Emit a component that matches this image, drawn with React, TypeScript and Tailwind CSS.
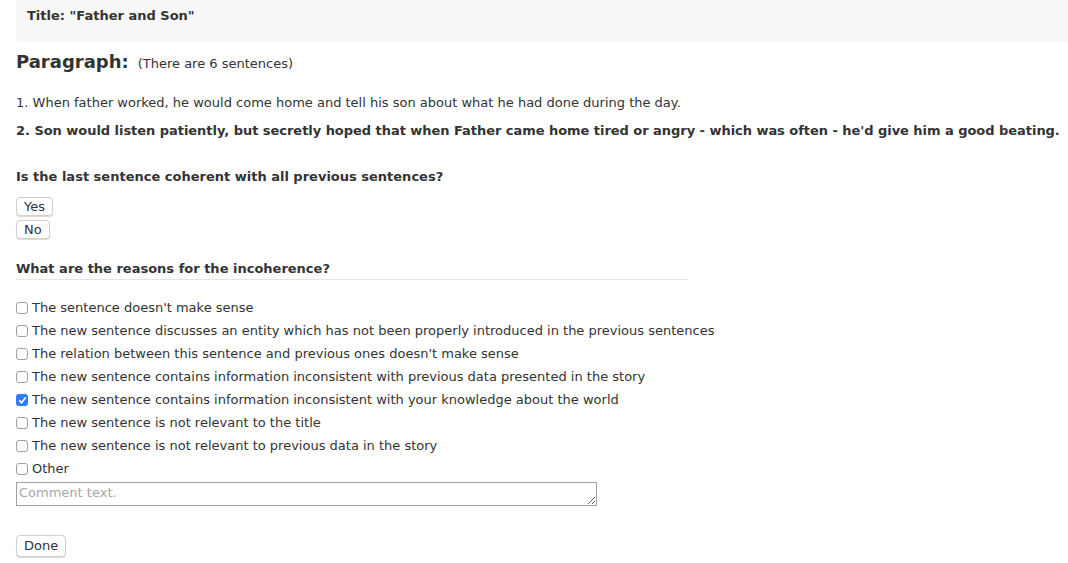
import React from "react";

const reasons = [
  "The sentence doesn't make sense",
  "The new sentence discusses an entity which has not been properly introduced in the previous sentences",
  "The relation between this sentence and previous ones doesn't make sense",
  "The new sentence contains information inconsistent with previous data presented in the story",
  "The new sentence contains information inconsistent with your knowledge about the world",
  "The new sentence is not relevant to the title",
  "The new sentence is not relevant to previous data in the story",
  "Other",
];

function Box({ checked }: { checked: boolean }) {
  if (checked) {
    return (
      <span className="w-[12px] h-[12px] rounded-[3px] bg-[#2f7bf5] flex items-center justify-center mr-[4px] shrink-0">
        <svg width="9" height="9" viewBox="0 0 10 10">
          <path d="M1.8 5.2 L4 7.6 L8.3 2" fill="none" stroke="white" strokeWidth="1.8" strokeLinecap="round" strokeLinejoin="round" />
        </svg>
      </span>
    );
  }
  return <span className="w-[12px] h-[12px] rounded-[3px] border border-[#a0a0a0] bg-white mr-[4px] shrink-0" />;
}

export default function App() {
  return (
    <div className="bg-white text-[#333] text-[13px] leading-[16px] min-h-[563px]" style={{ fontFamily: '"DejaVu Sans", Verdana, sans-serif' }}>
      <div className="pl-4">
        <div className="bg-[#f8f8f8] h-[42px] pl-[11px] pt-[8px] font-bold rounded-bl-[4px]">Title: "Father and Son"</div>
      </div>
      <div className="pl-4">
        <div className="mt-[8px] flex items-baseline">
          <span className="font-bold text-[18px] leading-[24px]">Paragraph:</span>
          <span className="ml-[9px] text-[13px]">(There are 6 sentences)</span>
        </div>
        <div className="mt-[21px] whitespace-nowrap">1. When father worked, he would come home and tell his son about what he had done during the day.</div>
        <div className="mt-[12px] font-bold whitespace-nowrap tracking-[-0.04px]">2. Son would listen patiently, but secretly hoped that when Father came home tired or angry - which was often - he'd give him a good beating.</div>
        <div className="mt-[30px] font-bold">Is the last sentence coherent with all previous sentences?</div>
        <div className="mt-[12px] flex flex-col items-start gap-[4px]">
          <button className="h-[19px] px-[7px] border border-[#d0d0d0] rounded-[4px] bg-white shadow-[0_1px_1px_rgba(0,0,0,0.15)] leading-[16px]">Yes</button>
          <button className="h-[19px] px-[7px] border border-[#d0d0d0] rounded-[4px] bg-white shadow-[0_1px_1px_rgba(0,0,0,0.15)] leading-[16px]">No</button>
        </div>
        <div className="mt-[22px] w-[672px] font-bold border-b border-[#e4e4e4] pb-[2px]">What are the reasons for the incoherence?</div>
        <div className="mt-[20px] flex flex-col gap-[7px]">
          {reasons.map((r, i) => (
            <label key={i} className="flex items-center h-[16px]">
              <Box checked={i === 4} />
              <span>{r}</span>
            </label>
          ))}
        </div>
        <textarea
          placeholder="Comment text."
          className="mt-[5px] block w-[581px] h-[24px] border border-[#a0a0a0] px-[2px] py-[2px] text-[13px] leading-[16px] placeholder:text-[#a8a8a8] resize"
          style={{ fontFamily: '"DejaVu Sans", Verdana, sans-serif' }}
        />
        <button className="mt-[29px] h-[22px] px-[7px] border border-[#d0d0d0] rounded-[4px] bg-white shadow-[0_1px_1px_rgba(0,0,0,0.15)]">Done</button>
      </div>
    </div>
  );
}
